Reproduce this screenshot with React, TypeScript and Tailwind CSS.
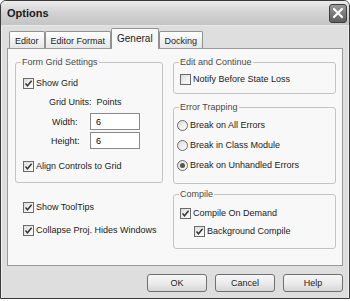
import React from "react";

const font = "font-['Liberation_Sans',Arial,sans-serif]";

function CheckBox({ checked }: { checked: boolean }) {
  return (
    <span className="w-[11px] h-[11px] border border-[#6a6a6a] bg-gradient-to-br from-[#dcdcdc] to-white flex items-center justify-center shrink-0">
      {checked && (
        <svg width="9" height="9" viewBox="0 0 9 9">
          <path d="M1.5 4.5 L3.5 6.8 L7.6 1.8" fill="none" stroke="#333" strokeWidth="1.4" />
        </svg>
      )}
    </span>
  );
}

function Check({ label, checked = true, className = "" }: { label: string; checked?: boolean; className?: string }) {
  return (
    <div className={"flex items-center h-[14px] gap-[2px] " + className}>
      <CheckBox checked={checked} />
      <span className="text-[#222]">{label}</span>
    </div>
  );
}

function Radio({ label, checked = false, className = "" }: { label: string; checked?: boolean; className?: string }) {
  return (
    <div className={"flex items-center h-[14px] gap-[2px] " + className}>
      <span className="w-[11px] h-[11px] rounded-full border border-[#6a6a6a] bg-gradient-to-br from-[#dcdcdc] to-white flex items-center justify-center shrink-0">
        {checked && <span className="w-[5px] h-[5px] rounded-full bg-[#555]" />}
      </span>
      <span className="text-[#222]">{label}</span>
    </div>
  );
}

function Group({ title, className, children }: { title: string; className: string; children: React.ReactNode }) {
  return (
    <fieldset className={"border border-[#c4c4c4] rounded-[3px] px-[6px] " + className}>
      <legend className="px-[1px] ml-[-1px] h-[12px] leading-[12px] text-[#4a4a4a]">{title}</legend>
      {children}
    </fieldset>
  );
}

function Tab({ label, active = false }: { label: string; active?: boolean }) {
  if (active) {
    return (
      <div className="h-[21px] mb-[-1px] px-[5px] pt-[3px] border border-b-0 border-[#919191] rounded-t-[2px] bg-[#f8f8f8] text-[#222] relative z-10 text-[10px]">
        {label}
      </div>
    );
  }
  return (
    <div className="h-[17px] px-[5px] pt-[2px] border border-b-0 border-[#919191] rounded-t-[2px] bg-gradient-to-b from-white to-[#e6e6e6] text-[#222]">
      {label}
    </div>
  );
}

function Button({ label }: { label: string }) {
  return (
    <div className="w-[60px] h-[18px] border border-[#707070] rounded-[3px] bg-gradient-to-b from-[#f6f6f6] via-[#ececec] to-[#d6d6d6] flex items-center justify-center text-[#222]">
      {label}
    </div>
  );
}

export default function App() {
  return (
    <div className={"w-[350px] h-[301px] bg-white " + font + " text-[9px] leading-[14px]"}>
      <div className="w-[350px] h-[299px] border border-[#3a3a3a] rounded-t-[6px] overflow-hidden flex flex-col bg-[#dedede]">
        {/* title bar */}
        <div className="h-[25px] shrink-0 bg-gradient-to-b from-[#ececec] via-[#d2d2d2] to-[#c4c4c4] flex items-center justify-between pl-[6px] pr-[2px] border-b border-[#e8e8e8]">
          <span className="text-[11px] font-bold text-[#1a1a1a] leading-none">Options</span>
          <div className="w-[18px] h-[19px] rounded-[3px] border border-[#3e3e3e] bg-gradient-to-b from-[#9a9a9a] to-[#5e5e5e] flex items-center justify-center">
            <svg width="12" height="12" viewBox="0 0 12 12">
              <path d="M2 2 L10 10 M10 2 L2 10" stroke="white" strokeWidth="2.2" strokeLinecap="round" />
            </svg>
          </div>
        </div>

        {/* body */}
        <div className="flex-1 px-[5px] border-x border-[#f0f0f0] flex flex-col">
          {/* tabs */}
          <div className="h-[22px] flex items-end pl-[2px]">
            <Tab label="Editor" />
            <Tab label="Editor Format" />
            <Tab label="General" active />
            <Tab label="Docking" />
          </div>

          {/* panel */}
          <div className="h-[218px] border border-[#9a9a9a] bg-[#f8f8f8] flex gap-[10px] pl-[7px] pr-[6px] pt-[7px]">
            <div className="w-[148px] flex flex-col">
              <Group title="Form Grid Settings" className="h-[127px]">
                <Check label="Show Grid" className="mt-[8px] ml-[1px]" />
                <div className="mt-[5px] h-[14px] pl-[27px] text-[#222]">Grid Units:&nbsp; Points</div>
                <div className="mt-[4px] h-[17px] flex items-center">
                  <span className="w-[68px] pl-[30px] text-[#222]">Width:</span>
                  <div className="w-[50px] h-[17px] border border-[#8a8a8a] bg-white pl-[5px] flex items-center">6</div>
                </div>
                <div className="mt-[2px] h-[17px] flex items-center">
                  <span className="w-[68px] pl-[29px] text-[#222]">Height:</span>
                  <div className="w-[50px] h-[17px] border border-[#8a8a8a] bg-white pl-[5px] flex items-center">6</div>
                </div>
                <Check label="Align Controls to Grid" className="mt-[10px] ml-[1px]" />
              </Group>
              <Check label="Show ToolTips" className="mt-[17px] ml-[8px]" />
              <Check label="Collapse Proj. Hides Windows" className="mt-[9px] ml-[8px]" />
            </div>

            <div className="flex-1 flex flex-col">
              <Group title="Edit and Continue" className="h-[38px]">
                <Check label="Notify Before State Loss" checked={false} className="mt-[4px]" />
              </Group>
              <Group title="Error Trapping" className="h-[83px] mt-[7px]">
                <Radio label="Break on All Errors" className="mt-[5px] ml-[-3px]" />
                <Radio label="Break in Class Module" className="mt-[6px] ml-[-3px]" />
                <Radio label="Break on Unhandled Errors" checked className="mt-[6px] ml-[-3px]" />
              </Group>
              <Group title="Compile" className="h-[61px] mt-[4px]">
                <Check label="Compile On Demand" className="mt-[6px]" />
                <Check label="Background Compile" className="mt-[4px] ml-[14px]" />
              </Group>
            </div>
          </div>

          {/* buttons */}
          <div className="flex justify-end gap-[8px] mt-[8px]">
            <Button label="OK" />
            <Button label="Cancel" />
            <Button label="Help" />
          </div>
        </div>
      </div>
    </div>
  );
}
